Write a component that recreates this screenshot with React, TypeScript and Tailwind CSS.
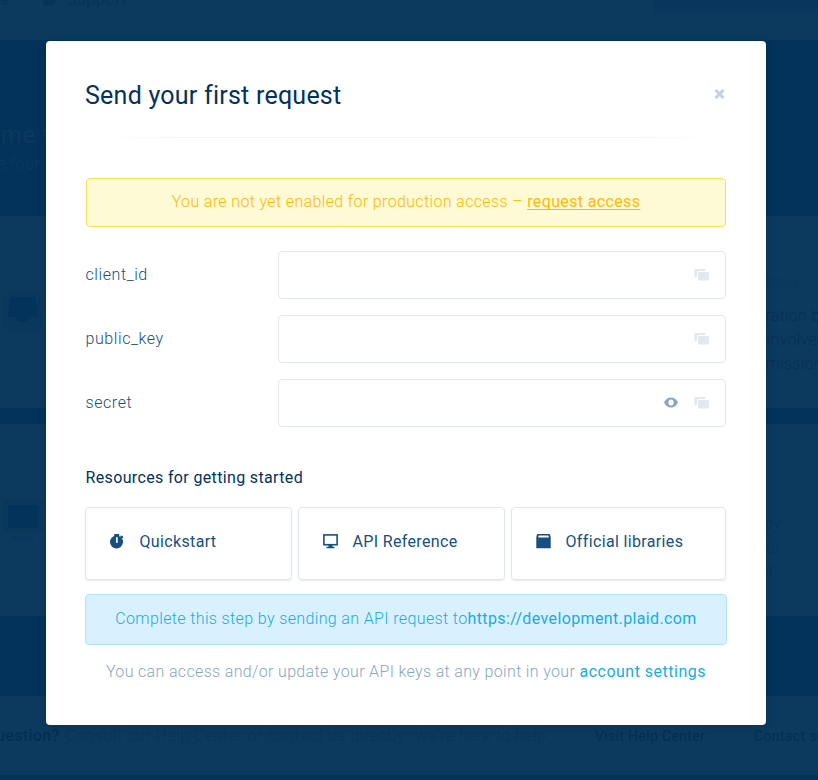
import React from "react";

function CopyIcon() {
  return (
    <svg width="16" height="12" viewBox="0 0 16 12" fill="#e3e8ef" aria-hidden="true">
      <path d="M1.200 0H11v2H3v6H1.200Q.5 8 .5 7.300V.7Q.5 0 1.200 0z" />
      <rect x="4" y="3" width="11" height="8.500" rx=".8" />
    </svg>
  );
}

function EyeIcon() {
  return (
    <svg className="-mt-[1px] mr-[1px]" width="14" height="11" viewBox="0 0 14 11" aria-hidden="true">
      <path d="M0 5.500Q2.600.5 7 .5t7 5q-2.600 5-7 5t-7-5z" fill="#8aa7c0" />
      <ellipse cx="7" cy="5.500" rx="2.600" ry="3" fill="#fff" />
      <path d="M6.400 4.200h1.200v1.600H6.400z" fill="#dfe8ef" />
    </svg>
  );
}

function TimerIcon() {
  return (
    <svg width="14" height="15" viewBox="0 0 14 15" aria-hidden="true">
      <circle cx="6.500" cy="8" r="6.500" fill="#164f80" />
      <path d="M4.300 0h4.900v2.500H4.300z" fill="#164f80" />
      <path d="M10 1.700h2.500l.5.700v1.900h-1.700z" fill="#164f80" />
      <path d="M6.200 3h1.400l.2 5.700H5.900z" fill="#fff" />
    </svg>
  );
}

function MonitorIcon() {
  return (
    <svg className="-ml-[.5px]" width="15" height="15" viewBox="0 0 15 15" aria-hidden="true">
      <rect x=".9" y=".9" width="13.200" height="9.800" fill="none" stroke="#164f80" strokeWidth="1.600" />
      <path d="M5.500 11h4v1.800h2V14.300h-8v-1.500h2z" fill="#164f80" />
    </svg>
  );
}

function BookIcon() {
  return (
    <svg width="15" height="15" viewBox="0 0 15 15" aria-hidden="true">
      <path d="M2 0h11q1 0 1.200 1l.5 2.500V14.300H.3V3.500L.8 1Q1 0 2 0z" fill="#164f80" />
      <path d="M2.600 1.500h9.800l.4 1.900H2.200z" fill="#fff" />
    </svg>
  );
}

function Backdrop() {
  return (
    <div className="h-[780px] w-[818px] overflow-hidden whitespace-nowrap bg-[#03325a]" aria-hidden="true">
      <div className="flex h-10 items-start justify-between bg-[#0c3a5e] text-[16px] text-[#07335a]">
        <div className="-mt-[12px] flex h-6 items-center">
          <span className="-ml-[27px] w-8">Page</span>
          <span className="ml-[38px] h-3 w-3 rounded-sm bg-[#07335a]" />
          <span className="ml-3 tracking-[0.450px]">Support</span>
        </div>
        <div className="h-[15px] w-[165px] rounded-bl bg-[#09365d]" />
      </div>
      <div className="h-44 pt-[79px]">
        <div className="-ml-[68px] text-[24px] leading-8 tracking-[0.600px] text-[#0c3a5e]">Welcome to</div>
        <div className="-ml-[40px] mt-[1px] text-[16px] font-light leading-6 tracking-[0.500px] text-[#0c3a5e]">These four</div>
      </div>
      <div className="flex h-48 justify-between bg-[#0c3a5e]">
        <div className="flex w-[46px] items-start pl-[3px] pt-[78px]">
          <div className="h-[36px] w-10 rounded bg-[#0a385d]">
            <svg width="40" height="32" viewBox="0 0 40 32">
              <path d="M8 3h24l3 20h-8l-4 5h-7l-3-5H5z" fill="#03325a" />
            </svg>
          </div>
        </div>
        <div className="w-[118px] pt-[54px] text-[16px] font-light leading-6 tracking-[0.300px] text-[#052f56]">
          <div className="ml-[29px] text-[#08365d]">(optional)</div>
          <div className="ml-[29px] mt-[10px]">integration by</div>
          <div className="ml-[25px]">team involved</div>
          <div className="ml-[42px]">permissions</div>
        </div>
      </div>
      <div className="h-4" />
      <div className="flex h-48 justify-between bg-[#0c3a5e]">
        <div className="flex w-[46px] items-start pl-[3px] pt-[76px]">
          <div className="h-8 w-10 rounded bg-[#0a385d] px-[5px] pt-[5px]">
            <div className="h-[23px] bg-[#03325a]" />
            <div className="mx-auto mt-2 h-1 w-5 rounded bg-[#09375d]" />
          </div>
        </div>
        <div className="w-[60px] pt-[88px] text-[16px] font-light leading-6 tracking-[0.300px] text-[#08345b]">
          <div className="ml-[6px]">by</div>
          <div className="-ml-[1px]">our</div>
          <div className="ml-[6px]">it</div>
        </div>
      </div>
      <div className="h-20" />
      <div className="flex h-[79px] items-start bg-[#0c3a5e] pt-[28px] text-[16px] leading-6 text-[#08345b]">
        <span className="-ml-[15px] w-[76px] shrink-0 font-medium tracking-[0.300px] text-[#042d54]">Question?</span>
        <span className="ml-1 w-[523px] shrink-0 font-light tracking-[0.480px]">
          Consult our Help Center or contact us directly–we're here to help
        </span>
        <span className="-mt-[10px] ml-[-9px] h-[37px] w-[142px] shrink-0 rounded border border-[#0b385d] pt-[9px] text-center text-[14px] tracking-[0.350px] text-[#042d54]">
          Visit Help Center
        </span>
        <span className="-mt-[10px] ml-4 h-[37px] w-[170px] shrink-0 rounded border border-[#0b385d] pl-4 pt-[9px] text-[14px] tracking-[0.350px] text-[#042d54]">
          Contact support
        </span>
      </div>
      <div className="h-[5px] bg-[#03325a]" />
    </div>
  );
}

function KeyRow({ label, secret = false }: { label: string; secret?: boolean }) {
  return (
    <div className="flex h-12 items-center">
      <label className="-ml-[.5px] w-[192.500px] text-[16px] font-light tracking-[0.580px] text-[#164f80]">{label}</label>
      <div className="flex h-12 flex-1 items-center justify-end gap-[15px] rounded border border-[#e3e8ef] pr-[15px]">
        {secret && <EyeIcon />}
        <CopyIcon />
      </div>
    </div>
  );
}

function ResourceCard({ icon, label }: { icon: React.ReactNode; label: string }) {
  return (
    <a className="flex h-[73px] items-center rounded border border-[#e0e8ef] pb-[4px] pl-[24px] text-[16px] tracking-[0.350px] text-[#164f80] shadow-[0_1px_2px_rgba(3,49,86,0.100)]">
      <span className="-mt-[1px] w-[29.500px] shrink-0">{icon}</span>
      {label}
    </a>
  );
}

function RequestDialog() {
  return (
    <section
      role="dialog"
      className="absolute left-[46px] top-[41px] h-[684px] w-[720px] whitespace-nowrap rounded-[4px] bg-white px-10 pt-[39px] shadow-[0_2px_8px_rgba(0,25,50,0.200)]"
    >
      <header className="flex h-[57px] items-start justify-between">
        <h1 className="-ml-[1px] text-[25px] leading-8 tracking-[0.240px] text-[#03325a]">Send your first request</h1>
        <button aria-label="Close" className="mr-[1px] mt-[9px]">
          <svg width="11" height="10" viewBox="0 0 11 10">
            <path d="M1.500 1l8 8M9.500 1l-8 8" stroke="#c2d2e0" strokeWidth="3" />
          </svg>
        </button>
      </header>
      <div className="mx-3 flex h-px">
        <div className="w-20 bg-linear-to-r from-transparent to-[#f3f5f7]" />
        <div className="flex-1 bg-[#f3f5f7]" />
        <div className="w-20 bg-linear-to-l from-transparent to-[#f3f5f7]" />
      </div>
      <div className="mt-10 h-[49px] rounded border border-[#ffdd57] bg-[#fffad6] text-center text-[16px] font-light leading-[46px] tracking-[0.360px] text-[#ffb900]">
        You are not yet enabled for production access –{" "}
        <a className="font-normal underline underline-offset-2 [text-decoration-skip-ink:none]">request access</a>
      </div>
      <div className="mt-6 flex flex-col gap-4">
        <KeyRow label="client_id" />
        <KeyRow label="public_key" />
        <KeyRow label="secret" secret />
      </div>
      <h2 className="-ml-[.5px] mt-[39px] text-[16px] leading-6 tracking-[0.350px] text-[#03325a]">Resources for getting started</h2>
      <div className="-ml-[1px] mt-[17px] grid grid-cols-[207px_207px_215px] gap-[6px]">
        <ResourceCard icon={<TimerIcon />} label="Quickstart" />
        <ResourceCard icon={<MonitorIcon />} label="API Reference" />
        <ResourceCard icon={<BookIcon />} label="Official libraries" />
      </div>
      <div className="-mx-[1px] mt-[14px] h-[51px] rounded border border-[#b2e5fa] bg-[#d9f1ff] text-center text-[16px] font-light leading-[47px] tracking-[0.370px] text-[#1aabe4]">
        Complete this step by sending an API request to<span className="font-normal">https://development.plaid.com</span>
      </div>
      <p className="mt-[15px] text-center text-[16px] font-light leading-6 tracking-[0.340px] text-[#8aa7c0]">
        You can access and/or update your API keys at any point in your{" "}
        <a className="font-normal tracking-[0.500px] text-[#1aabe4]">account settings</a>
      </p>
    </section>
  );
}

export default function App() {
  return (
    <main className="relative h-[780px] w-[818px] overflow-hidden font-[Roboto,sans-serif]">
      <Backdrop />
      <RequestDialog />
    </main>
  );
}
